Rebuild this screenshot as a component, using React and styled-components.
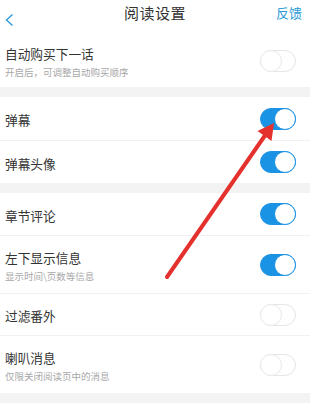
import React from "react";
import styled, { createGlobalStyle } from "styled-components";

const Global = createGlobalStyle`
  html, body { margin: 0; padding: 0; background: #fff; }
  body { font-family: "Noto Sans CJK SC", "Noto Sans", sans-serif; }
`;

const Page = styled.div`
  position: relative;
  width: 319px;
  height: 408px;
  overflow: hidden;
  background: #fff;
`;

const Content = styled.div`
  width: 310px;
  display: flex;
  flex-direction: column;
`;

const Header = styled.div`
  height: 34px;
  display: grid;
  grid-template-columns: 60px 1fr 60px;
  align-items: start;
`;

const Back = styled.div`
  padding: 7px 0 0 5px;
  height: 12px;
`;

const Title = styled.div`
  text-align: center;
  font-size: 15px;
  line-height: 16px;
  padding-top: 5px;
  color: #333;
  letter-spacing: 0.5px;
`;

const Feedback = styled.div`
  text-align: right;
  padding-right: 8px;
  padding-top: 6px;
  font-size: 13px;
  line-height: 14px;
  color: #2a9ad8;
`;

const Band = styled.div`
  height: 10px;
  background: #f3f3f3;
`;

const Divider = styled.div`
  height: 1px;
  background: #f1f1f1;
`;

const Row = styled.div`
  height: ${(p) => p.$h}px;
  display: flex;
  align-items: center;
  justify-content: space-between;
  padding: 0 14px 0 5px;
`;

const Texts = styled.div`
  display: flex;
  flex-direction: column;
  gap: 6px;
  padding-top: 2px;
`;

const Label = styled.div`
  font-size: 12.7px;
  line-height: 15px;
  color: #333;
`;

const Sub = styled.div`
  font-size: 9.5px;
  line-height: 11px;
  color: #a8a8a8;
`;

const Track = styled.div`
  position: relative;
  width: 36px;
  height: 22px;
  box-sizing: border-box;
  border-radius: 11px;
  background: ${(p) => (p.$on ? "#1b93e4" : "#fff")};
  border: 1px solid ${(p) => (p.$on ? "#1b93e4" : "#e6e6e6")};
`;

const Knob = styled.div`
  position: absolute;
  top: -1px;
  ${(p) => (p.$on ? "right: -1px;" : "left: -1px;")}
  width: 22px;
  height: 22px;
  box-sizing: border-box;
  border-radius: 50%;
  background: #fff;
  border: 1px solid ${(p) => (p.$on ? "#1b93e4" : "#e9e9e9")};
`;

const Arrow = styled.svg`
  position: absolute;
  left: 0;
  top: 0;
  pointer-events: none;
`;

function Toggle({ on }) {
  return (
    <Track $on={on}>
      <Knob $on={on} />
    </Track>
  );
}

function Setting({ h, label, sub, on }) {
  return (
    <Row $h={h}>
      <Texts>
        <Label>{label}</Label>
        {sub && <Sub>{sub}</Sub>}
      </Texts>
      <Toggle on={on} />
    </Row>
  );
}

export default function App() {
  return (
    <Page>
      <Global />
      <Content>
        <Header>
          <Back>
            <svg width="9" height="12" viewBox="0 0 9 12">
              <polyline points="7.5,0.5 1.5,6 7.5,11.5" fill="none" stroke="#2a9ad8" strokeWidth="1.4" />
            </svg>
          </Back>
          <Title>阅读设置</Title>
          <Feedback>反馈</Feedback>
        </Header>
        <Setting h={53} label="自动购买下一话" sub="开启后，可调整自动购买顺序" on={false} />
        <Band />
        <Setting h={43} label="弹幕" on />
        <Divider />
        <Setting h={42} label="弹幕头像" on />
        <Band />
        <Setting h={42} label="章节评论" on />
        <Divider />
        <Setting h={57} label="左下显示信息" sub="显示时间\页数等信息" on />
        <Divider />
        <Setting h={41} label="过滤番外" on={false} />
        <Divider />
        <Setting h={57} label="喇叭消息" sub="仅限关闭阅读页中的消息" on={false} />
        <Band />
      </Content>
      <Arrow width="319" height="408" viewBox="0 0 319 408">
        <line x1="167" y1="277" x2="266" y2="134" stroke="#e5312e" strokeWidth="4" strokeLinecap="round" />
        <polygon points="274,123 271.5,141 257.5,131" fill="#e5312e" />
      </Arrow>
    </Page>
  );
}
